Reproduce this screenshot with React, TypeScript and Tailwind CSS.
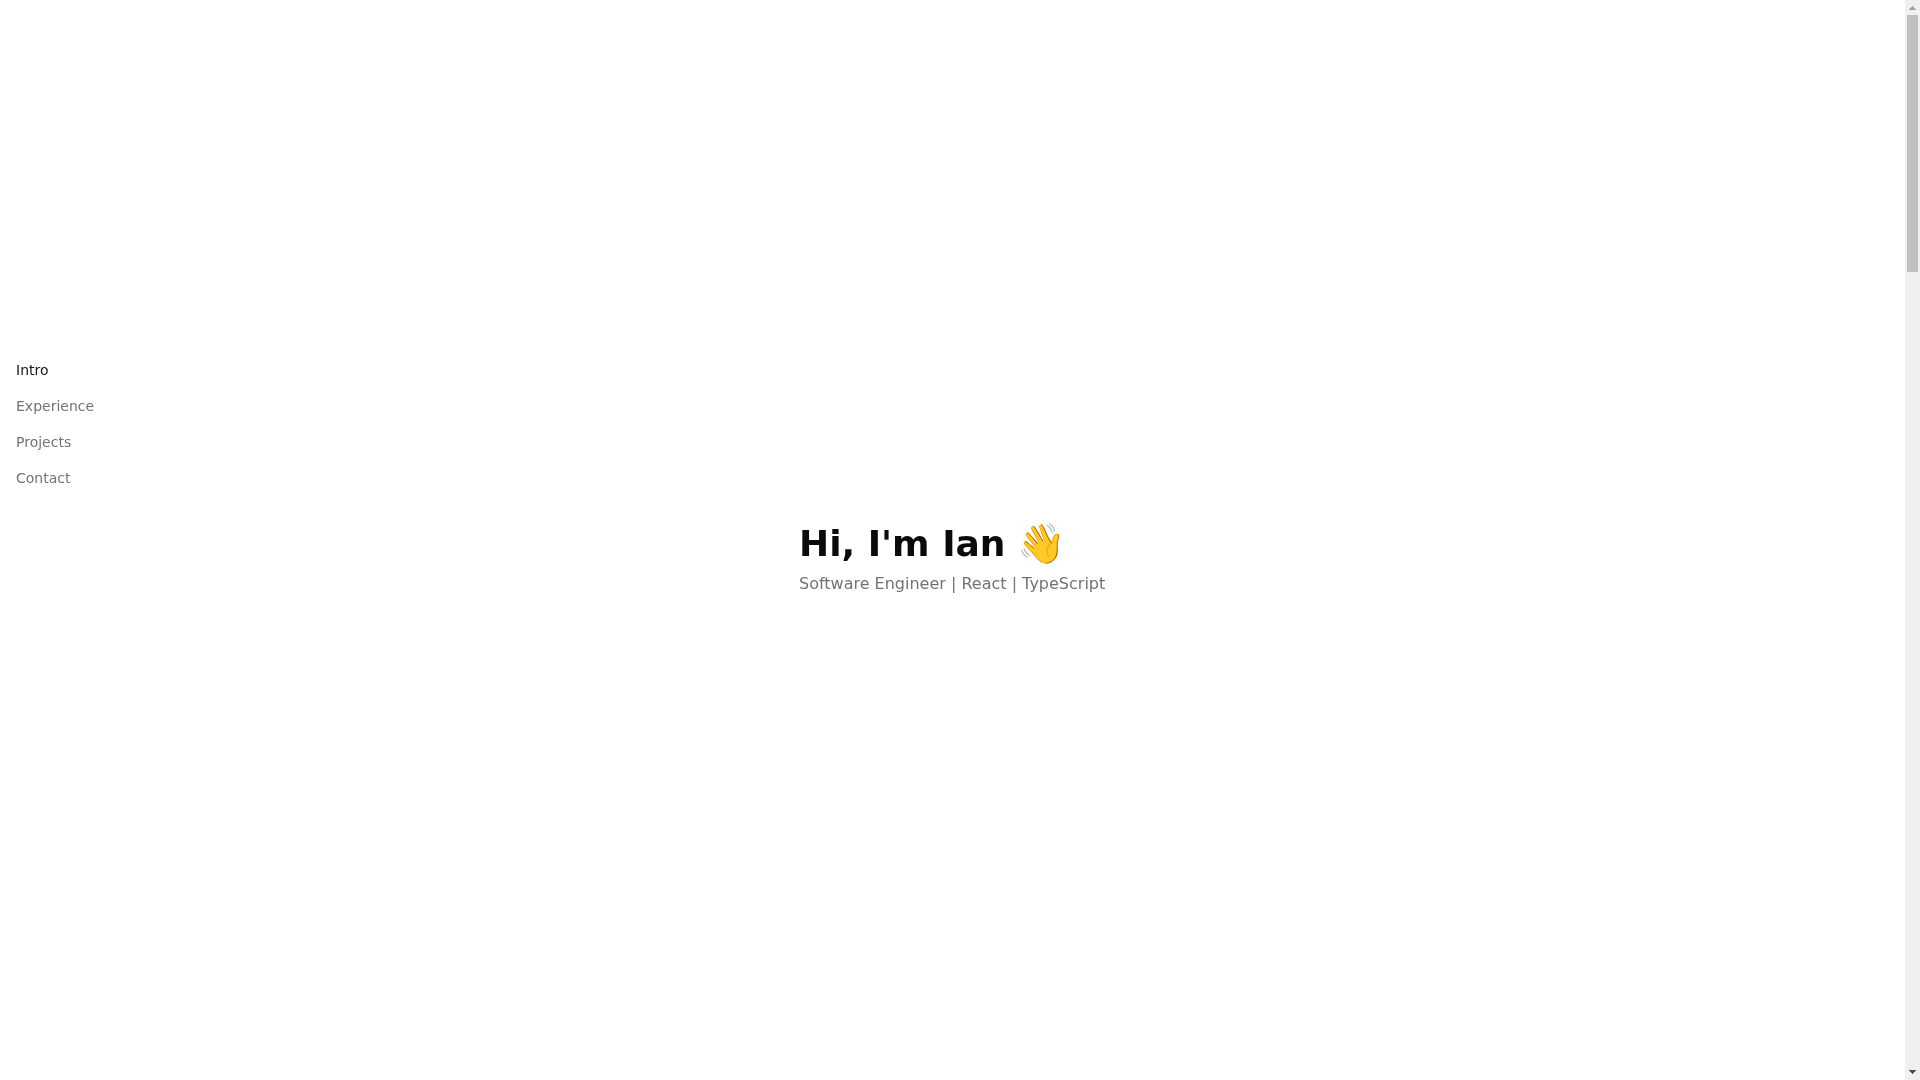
import React, { useRef, useState } from 'react';

const sections = [
  { id: 'intro', label: 'Intro' },
  { id: 'experience', label: 'Experience' },
  { id: 'projects', label: 'Projects' },
  { id: 'contact', label: 'Contact' },
];

interface NavProps {
  active: string;
  onSelect: (id: string) => void;
}

const Nav: React.FC<NavProps> = ({ active, onSelect }) => (
  <header className="sticky top-0 h-0">
    <nav className="inline-flex flex-col gap-4 px-4 pt-[calc(100vh/3)] will-change-transform">
      {sections.map((section) => (
        <a
          key={section.id}
          href={`#${section.id}`}
          onClick={() => onSelect(section.id)}
          className={
            section.id === active
              ? 'text-sm text-[#171717]'
              : 'text-sm text-[#737373] hover:text-[#171717]'
          }
        >
          {section.label}
        </a>
      ))}
    </nav>
  </header>
);

interface ScrollbarProps {
  offset: number;
  onStep: (delta: number) => void;
}

const Scrollbar: React.FC<ScrollbarProps> = ({ offset, onStep }) => (
  <div className="flex w-[15px] shrink-0 flex-col bg-[#f0f0f0]">
    <button
      aria-label="Scroll up"
      onClick={() => onStep(-100)}
      className={offset > 0 ? 'h-[15px] text-[#505050]' : 'h-[15px] text-[#a3a3a3]'}
    >
      <svg className="size-[15px]" viewBox="0 0 15 15" fill="currentColor" shapeRendering="crispEdges">
        <path d="M7 6h1v1h1v1h1v1h1v1H4V9h1V8h1V7h1z" />
      </svg>
    </button>
    <div className="flex flex-1 flex-col px-0.5">
      <div className="h-[24.5%] bg-[#c0c0c0]" style={{ transform: `translateY(${offset * 100}%)` }} />
    </div>
    <button aria-label="Scroll down" onClick={() => onStep(100)} className="h-[15px] text-[#505050]">
      <svg className="size-[15px]" viewBox="0 0 15 15" fill="currentColor" shapeRendering="crispEdges">
        <path d="M4 5h7v1h-1v1H9v1H8v1H7V8H6V7H5V6H4z" />
      </svg>
    </button>
  </div>
);

const App: React.FC = () => {
  const [active, setActive] = useState('intro');
  const [offset, setOffset] = useState(0);
  const pane = useRef<HTMLDivElement>(null);

  // how many screens the page has moved down
  const handleScroll = (e: React.UIEvent<HTMLDivElement>) => {
    setOffset(e.currentTarget.scrollTop / e.currentTarget.clientHeight);
  };

  return (
    <div className="flex h-screen bg-white font-['DejaVu_Sans',sans-serif] text-[#0a0a0a]">
      <div ref={pane} onScroll={handleScroll} className="min-w-0 flex-1 overflow-y-auto [scrollbar-width:none]">
        <Nav active={active} onSelect={setActive} />
        <main>
          <section id="intro" className="flex min-h-screen flex-col items-center justify-center">
            <div className="pt-10 will-change-transform">
              <h1 className="flex items-center gap-3 text-4xl font-bold">
                Hi, I'm Ian <span className="text-[39px] leading-10 font-normal">👋</span>
              </h1>
              <p className="mt-2 text-[#737373]">Software Engineer | React | TypeScript</p>
            </div>
          </section>
          <section id="experience" className="min-h-screen" />
          <section id="projects" className="min-h-screen" />
          <section id="contact" className="min-h-screen" />
        </main>
      </div>
      <Scrollbar offset={offset} onStep={(delta) => pane.current?.scrollBy({ top: delta })} />
    </div>
  );
};

export default App;
